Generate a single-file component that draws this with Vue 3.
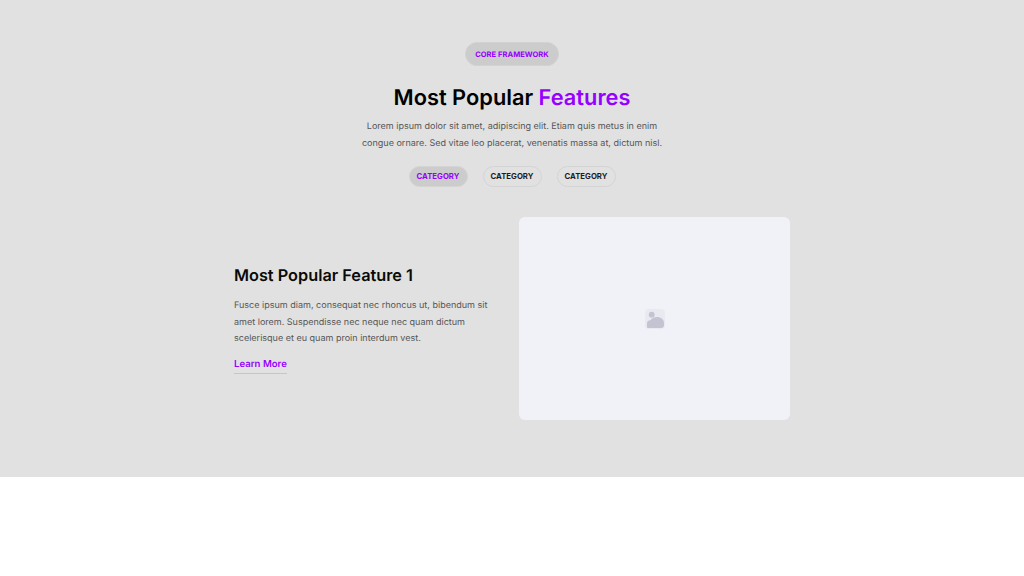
<script setup>
const categorias = [
  { nome: 'CATEGORY', ativa: true },
  { nome: 'CATEGORY', ativa: false },
  { nome: 'CATEGORY', ativa: false }
]
</script>

<template>
  <section class="secao">
    <header class="topo">
      <span class="selo">CORE FRAMEWORK</span>
      <h1>Most Popular <span class="roxo">Features</span></h1>
      <p class="intro">
        Lorem ipsum dolor sit amet, adipiscing elit. Etiam quis metus in enim<br />
        congue ornare. Sed vitae leo placerat, venenatis massa at, dictum nisl.
      </p>
      <div class="filtros">
        <button
          v-for="(c, i) in categorias"
          :key="i"
          class="filtro"
          :class="{ ativa: c.ativa }"
        >
          {{ c.nome }}
        </button>
      </div>
    </header>

    <div class="conteudo">
      <div class="texto">
        <h2>Most Popular Feature 1</h2>
        <p>
          Fusce ipsum diam, consequat nec rhoncus ut, bibendum sit<br />
          amet lorem. Suspendisse nec neque nec quam dictum<br />
          scelerisque et eu quam proin interdum vest.
        </p>
        <a class="link" href="#">Learn More</a>
      </div>
      <div class="imagem">
        <svg width="20" height="20" viewBox="0 0 20 20" aria-hidden="true">
          <rect width="20" height="20" rx="4" fill="#e9e9f0" />
          <circle cx="6.7" cy="5.7" r="2.9" fill="#c3c3d2" />
          <path d="M2 18v-3.5C2 12.5 3.6 11 5.6 11.2 7 9.2 9.4 8 12 8c3.8 0 7 2.4 7 6v2a3 3 0 0 1-3 3H3a1 1 0 0 1-1-1Z" fill="#c3c3d2" />
        </svg>
      </div>
    </div>
  </section>
</template>

<style scoped>
.secao {
  height: 477px;
  box-sizing: border-box;
  background: #e1e1e1;
  padding-top: 42px;
  font-family: Inter, "Liberation Sans", sans-serif;
  text-rendering: geometricPrecision;
}

.topo {
  display: flex;
  flex-direction: column;
  align-items: center;
  text-align: center;
}

.selo {
  height: 24px;
  width: 94px;
  box-sizing: border-box;
  padding-top: 1px;
  display: flex;
  align-items: center;
  justify-content: center;
  border-radius: 12px;
  background: #cccccc;
  border: 1px solid #d2d2d2;
  color: #9500ff;
  font-size: 7.6px;
  font-weight: 700;
  white-space: nowrap;
}

h1 {
  margin: 18px 0 0;
  font-size: 21.8px;
  line-height: 29px;
  font-weight: 600;
  color: #000;
}

.roxo {
  color: #9500ff;
}

.intro {
  margin: 5px 0 0;
  font-size: 9.03px;
  line-height: 17px;
  color: #555;
}

.filtros {
  display: flex;
  gap: 15px;
  margin-top: 14px;
}

.filtro {
  width: 59px;
  height: 21px;
  box-sizing: border-box;
  padding: 0 0 1px;
  border: 1px solid #d4d4d4;
  border-radius: 11px;
  background: transparent;
  font-family: inherit;
  font-size: 7.75px;
  font-weight: 700;
  color: #1c1c1c;
}

.filtro.ativa {
  background: #cccccc;
  color: #9500ff;
}

.conteudo {
  display: flex;
  align-items: center;
  justify-content: center;
  gap: 32px;
  margin-top: 30px;
}

.texto {
  width: 253px;
  padding-top: 2px;
  white-space: nowrap;
}

h2 {
  margin: 0;
  font-size: 16.3px;
  line-height: 20px;
  font-weight: 600;
  color: #0a0a0a;
}

.texto p {
  margin: 13px 0 0;
  font-size: 9.03px;
  line-height: 16.5px;
  color: #555;
}

.link {
  display: inline-block;
  margin-top: 10px;
  padding-bottom: 2px;
  border-bottom: 1px solid #d9b3f5;
  font-size: 9.6px;
  line-height: 13px;
  font-weight: 600;
  color: #9500ff;
  text-decoration: none;
}

.imagem {
  width: 271px;
  height: 203px;
  border-radius: 6px;
  background: #f1f2f8;
  display: flex;
  align-items: center;
  justify-content: center;
}
</style>
